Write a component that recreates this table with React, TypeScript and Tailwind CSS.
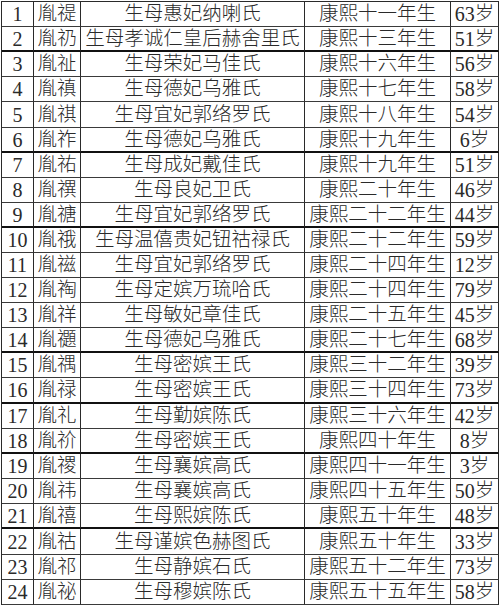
/**
 * Kangxi princes table
 * Plain bordered grid: index, name, mother, birth year, age
 */

interface PrinceRow {
  no: number;
  name: string;
  mother: string;
  born: string;
  age: string;
  tall?: boolean;
  heavy?: boolean;
}

const rows: PrinceRow[] = [
  { no: 1, name: "胤禔", mother: "生母惠妃纳喇氏", born: "康熙十一年生", age: "63岁" },
  { no: 2, name: "胤礽", mother: "生母孝诚仁皇后赫舍里氏", born: "康熙十三年生", age: "51岁", heavy: true },
  { no: 3, name: "胤祉", mother: "生母荣妃马佳氏", born: "康熙十六年生", age: "56岁" },
  { no: 4, name: "胤禛", mother: "生母德妃乌雅氏", born: "康熙十七年生", age: "58岁" },
  { no: 5, name: "胤祺", mother: "生母宜妃郭络罗氏", born: "康熙十八年生", age: "54岁", tall: true },
  { no: 6, name: "胤祚", mother: "生母德妃乌雅氏", born: "康熙十九年生", age: "6岁", heavy: true },
  { no: 7, name: "胤祐", mother: "生母成妃戴佳氏", born: "康熙十九年生", age: "51岁" },
  { no: 8, name: "胤禩", mother: "生母良妃卫氏", born: "康熙二十年生", age: "46岁" },
  { no: 9, name: "胤禟", mother: "生母宜妃郭络罗氏", born: "康熙二十二年生", age: "44岁", heavy: true },
  { no: 10, name: "胤䄉", mother: "生母温僖贵妃钮祜禄氏", born: "康熙二十二年生", age: "59岁" },
  { no: 11, name: "胤禌", mother: "生母宜妃郭络罗氏", born: "康熙二十四年生", age: "12岁" },
  { no: 12, name: "胤祹", mother: "生母定嫔万琉哈氏", born: "康熙二十四年生", age: "79岁" },
  { no: 13, name: "胤祥", mother: "生母敏妃章佳氏", born: "康熙二十五年生", age: "45岁" },
  { no: 14, name: "胤禵", mother: "生母德妃乌雅氏", born: "康熙二十七年生", age: "68岁", heavy: true },
  { no: 15, name: "胤禑", mother: "生母密嫔王氏", born: "康熙三十二年生", age: "39岁" },
  { no: 16, name: "胤禄", mother: "生母密嫔王氏", born: "康熙三十四年生", age: "73岁", tall: true, heavy: true },
  { no: 17, name: "胤礼", mother: "生母勤嫔陈氏", born: "康熙三十六年生", age: "42岁" },
  { no: 18, name: "胤祄", mother: "生母密嫔王氏", born: "康熙四十年生", age: "8岁", heavy: true },
  { no: 19, name: "胤禝", mother: "生母襄嫔高氏", born: "康熙四十一年生", age: "3岁" },
  { no: 20, name: "胤祎", mother: "生母襄嫔高氏", born: "康熙四十五年生", age: "50岁" },
  { no: 21, name: "胤禧", mother: "生母熙嫔陈氏", born: "康熙五十年生", age: "48岁", heavy: true },
  { no: 22, name: "胤祜", mother: "生母谨嫔色赫图氏", born: "康熙五十年生", age: "33岁", tall: true },
  { no: 23, name: "胤祁", mother: "生母静嫔石氏", born: "康熙五十二年生", age: "73岁" },
  { no: 24, name: "胤祕", mother: "生母穆嫔陈氏", born: "康熙五十五年生", age: "58岁" },
];

function Row({ row }: { row: PrinceRow }) {
  // explicit class names so Tailwind picks them up
  const height = row.tall ? "h-[26px]" : "h-[25px]";
  const line = row.heavy ? "border-b-2 border-b-[#111]" : "border-b border-b-[#3a3a3a]";
  const cell = `flex items-center justify-center whitespace-nowrap border-r border-r-[#2a2a2a] ${line}`;

  return (
    <div className={`grid grid-cols-[32px_47px_224px_146px_48px] ${height}`}>
      <div className={`${cell} text-[20px]`}>{row.no}</div>
      <div className={cell}>{row.name}</div>
      <div className={cell}>{row.mother}</div>
      <div className={cell}>{row.born}</div>
      <div className={cell}>
        <span className="text-[20px]">{row.age.slice(0, -1)}</span>
        <span>岁</span>
      </div>
    </div>
  );
}

export default function App() {
  return (
    <div className="w-[500px] h-[605px] bg-white overflow-hidden pt-px pl-px">
      <div className="w-[498px] border-l border-t border-[#2a2a2a] font-['Liberation_Serif','Noto_Sans_CJK_SC',serif] font-light text-[19.5px] leading-none text-[#2a2a2a]">
        {rows.map((row) => (
          <Row key={row.no} row={row} />
        ))}
      </div>
    </div>
  );
}
